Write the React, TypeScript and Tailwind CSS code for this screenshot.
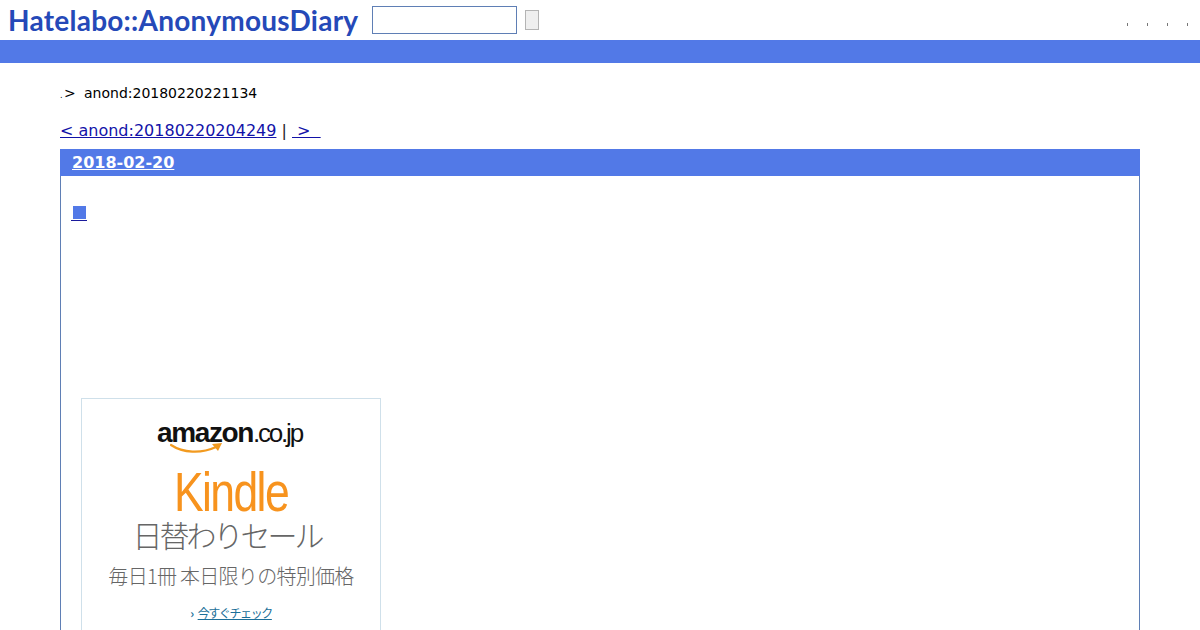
export default function App() {
  return (
    <div className="h-[630px] overflow-hidden bg-white font-['DejaVu_Sans',sans-serif] text-black">
      <header className="flex h-10 items-center">
        <h1 className="ml-[8px] w-[364px] font-['Lato',sans-serif] text-[28px] font-bold leading-10 tracking-[0.25px] text-[#2549b8]">
          Hatelabo::AnonymousDiary
        </h1>
        <input className="h-7 w-[145px] border border-[#5f7fb5] bg-white" aria-label="search" />
        <button className="ml-2 h-5 w-[14px] border border-[#b4b4b4] bg-[#efefef]" aria-label="submit" />
        <ul className="ml-auto mr-[12px] mt-[8px] flex gap-[19px]">
          <li className="h-[3px] w-px bg-[#777]" />
          <li className="h-[3px] w-px bg-[#777]" />
          <li className="h-[3px] w-px bg-[#777]" />
          <li className="h-[3px] w-px bg-[#777]" />
        </ul>
      </header>
      <div className="h-[23px] bg-[#5279e7]" />

      <main className="px-[60px]">
        <div className="mt-[21px] flex h-[18px] items-center text-[14px] leading-[18px]">
          <span className="w-[4px] pt-[5px] text-[8px] leading-[13px]">.</span>
          <span className="w-[20px]">&gt;</span>
          <span>anond:20180220221134</span>
        </div>

        <nav className="mt-[19px] h-[19px] text-[16px] leading-[19px]">
          <a href="#" className="text-[#1212a8] underline">&lt; anond:20180220204249</a>
          <span className="text-[#222]"> | </span>
          <a href="#" className="text-[#1212a8] underline">&nbsp;&gt;&nbsp;&nbsp;</a>
        </nav>

        <section className="mt-[9px] h-[500px] border-x border-[#5f7fb5]">
          <h2 className="-mx-px h-[27px] bg-[#5279e7] pl-3 text-[16px] font-bold leading-[27px] text-white">
            <a href="#" className="underline">2018-02-20</a>
          </h2>
          <div className="pl-[10px] pt-[26px]">
            <a href="#" className="block h-[19px] w-[16px] border-b border-[#1a1a9c] pl-[2px] pt-[4px]">
              <span className="block h-[13px] w-[13px] bg-[#5279e7]" />
            </a>
          </div>

          <aside className="ml-5 mt-[177px] h-[300px] w-[300px] border border-[#cfe0ea] bg-white">
            <div className="flex h-[52px] items-end justify-center pr-[3px]">
              <span className="font-['Liberation_Sans',sans-serif] text-[28px] font-bold leading-[36px] tracking-[-1.4px] text-[#111]">
                amazon
              </span>
              <span className="font-['Liberation_Sans',sans-serif] text-[26px] leading-[36px] tracking-[-2.2px] text-[#111]">
                .co.jp
              </span>
            </div>
            <svg className="ml-[87px] mt-[-8px] block" width="54" height="13" viewBox="0 0 54 13" fill="none">
              <path d="M2 2c12 8 30 9 45 2" stroke="#f29a1f" strokeWidth="2.2" strokeLinecap="round" />
              <path d="M43 1l10-1-4 8z" fill="#f29a1f" />
            </svg>
            <p className="mt-[14px] scale-x-[0.81] text-center font-['Liberation_Sans',sans-serif] text-[55px] leading-[44px] tracking-[-2px] text-[#f7931e]">
              Kindle
            </p>
            <p className="mt-[4px] pr-[8px] text-center font-['Noto_Sans_CJK_JP',sans-serif] text-[30px] font-light leading-[32px] tracking-[-3px] text-[#666]">
              日替わりセール
            </p>
            <p className="mt-[12px] text-center font-['Noto_Sans_CJK_JP',sans-serif] text-[20px] font-light leading-[28px] tracking-[-0.7px] text-[#666]">
              毎日1冊 本日限りの特別価格
            </p>
            <p className="mt-[13px] text-center font-['Noto_Sans_CJK_JP',sans-serif] text-[12px] leading-[20px] tracking-[-1.4px] text-[#1c6f99]">
              <span className="mr-[5px] font-bold">›</span>
              <span className="underline">今すぐチェック</span>
            </p>
          </aside>
        </section>
      </main>
    </div>
  );
}
